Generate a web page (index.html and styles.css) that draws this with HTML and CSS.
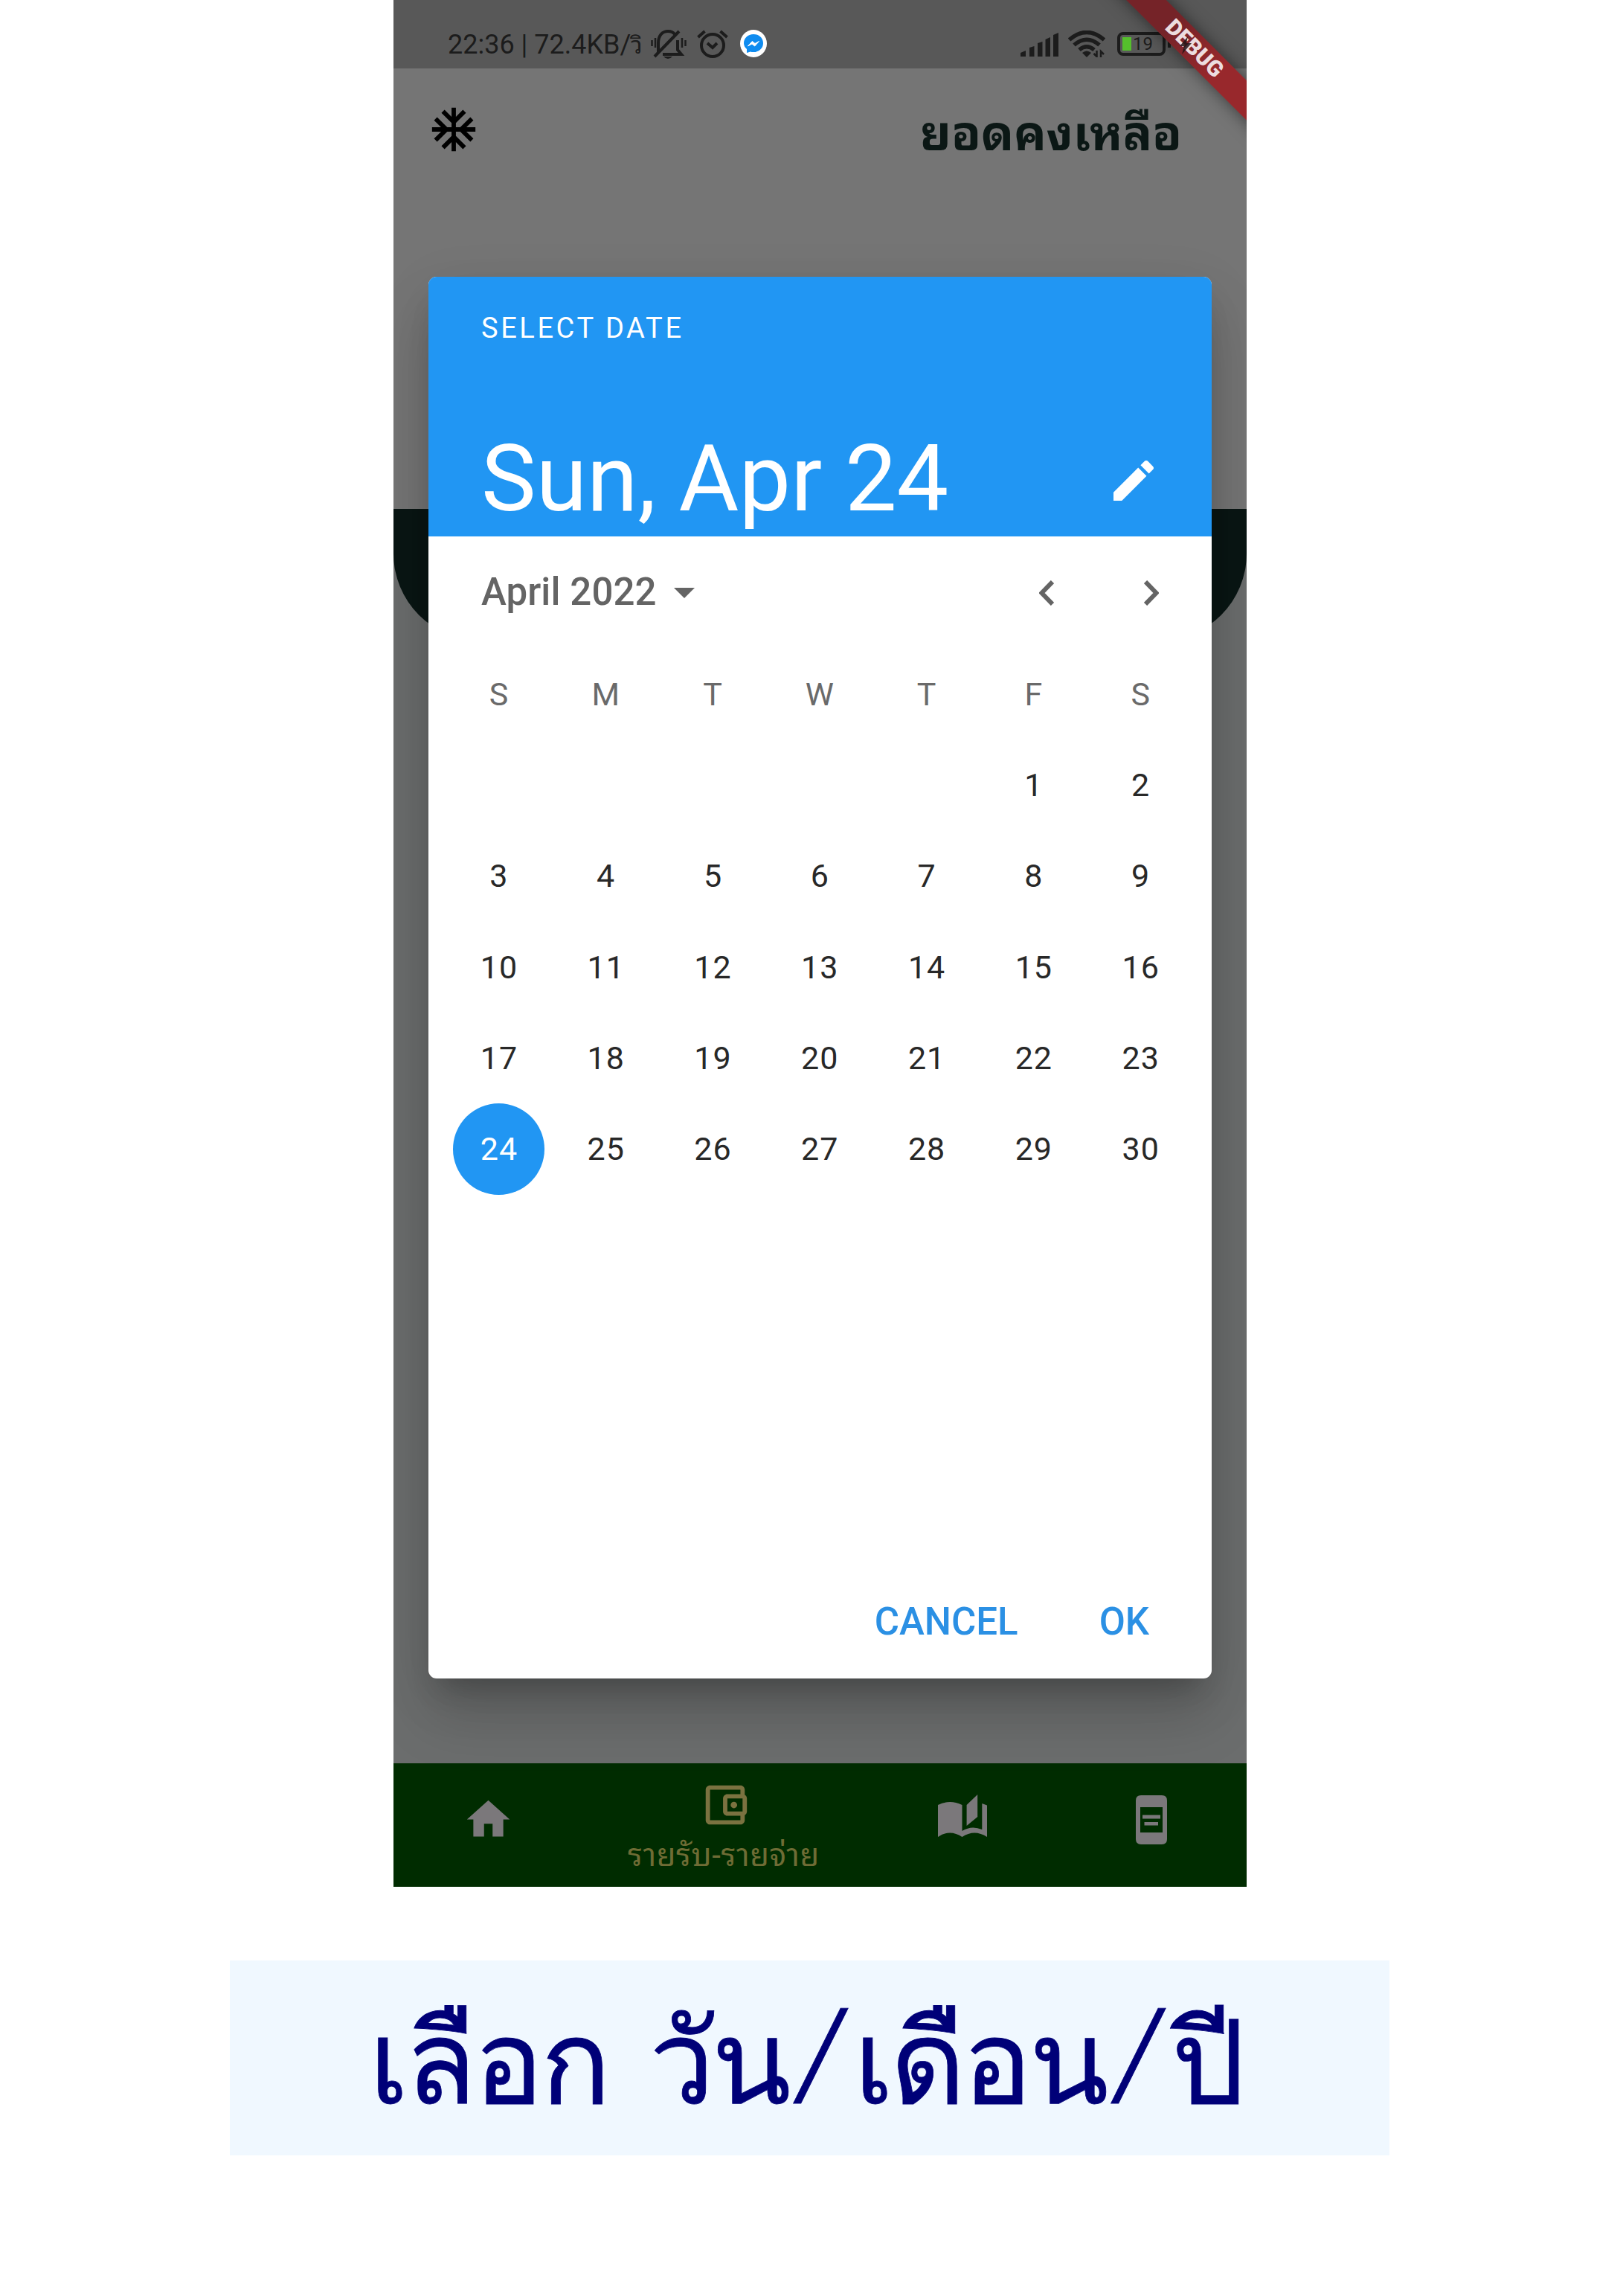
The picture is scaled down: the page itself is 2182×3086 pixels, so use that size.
FILE: index.html
```
<!DOCTYPE html>
<html lang="th">
<head>
<meta charset="utf-8">
<title>เลือก วัน/เดือน/ปี</title>
<link rel="stylesheet" href="styles.css">
</head>
<body>
<main class="page">
  <section class="phone">
    <header class="status">
      <span class="status-text">22:36 | 72.4KB/<span class="unit">วิ</span></span>
      <svg class="bell" viewBox="0 0 48 40" fill="none" stroke="#1c1c1c" stroke-width="4">
        <path d="M10 31V18C10 7 16 2 23 2c4 0 7 1 9 4M36 14v13l5 6H16M5 36L38 2"/>
        <path d="M1.500 14v8M6 11v13M42 11v13M46.500 14v8" stroke-width="2.500"/>
        <path d="M17 36h12q-6 6-12 0z" fill="#1c1c1c" stroke="none"/>
      </svg>
      <svg class="alarm" viewBox="0 0 42 38" fill="none" stroke="#1c1c1c" stroke-width="4">
        <circle cx="21" cy="21" r="15"/><path d="M14 18l7 6 6-6M1.500 10l9-8M31.500 2l9 8"/>
      </svg>
      <svg class="messenger" viewBox="0 0 36 37">
        <ellipse cx="18" cy="18.500" rx="18" ry="18.500" fill="#fff"/>
        <path d="M18 6c7.500 0 13 5.200 13 12s-5.500 12-13 12c-2 0-3-.3-4-.6L9 31v-5c-2.500-2-4-4.800-4-8C5 11.200 10.500 6 18 6z" fill="#0f8cf0"/>
        <path d="M10.500 22l5.800-6.500 3.700 3 5.500-3-5.800 6.500-3.700-3z" fill="#fff" stroke="#fff"/>
      </svg>
      <span class="spacer"></span>
      <svg class="signal" viewBox="0 0 51 32" fill="#1c1c1c">
        <path d="M0 32v-5l7-3v8zM12 32V20l6.500-2v14zM23 32V14l6.500-2v20zM33.500 32V9l6.500-3v26zM44 32V3l7-3v32z"/>
      </svg>
      <svg class="wifi" viewBox="0 0 50 36" fill="none" stroke="#1c1c1c" stroke-width="5.500">
        <path d="M1.500 12.500Q25-7.500 48.500 12.500M8 19.500Q25 5 42 19.500M15 26Q25 17.500 35 26"/>
        <path d="M19 30q6-5 12 0l-6 6z" fill="#1c1c1c" stroke="none"/>
        <path d="M38.500 27v8l-4-4M44 36v-8l4 4" stroke-width="2.500"/>
      </svg>
      <span class="battery"><i class="charge"></i>19</span>
      <span class="nub"></span>
    </header>
    <div class="ribbon">DEBUG</div>
    <svg class="bolt" viewBox="0 0 16 24"><path d="M11 0L0 13h6L3 24 16 9H9z"/></svg>

    <div class="balance">
      <svg class="snow" viewBox="0 0 24 24"><path d="M22 11h-4.170l3.240-3.240-1.410-1.420L15 11h-2V9l4.660-4.660-1.420-1.410L13 6.170V2h-2v4.170L7.760 2.930 6.340 4.340 11 9v2H9L4.340 6.340 2.930 7.760 6.170 11H2v2h4.170l-3.240 3.240 1.410 1.420L9 13h2v2l-4.660 4.660 1.420 1.410L11 17.830V22h2v-4.170l3.240 3.240 1.420-1.410L13 15v-2h2l4.660 4.660 1.410-1.420L17.830 13H22z"/></svg>
      <h1 class="title">ยอดคงเหลือ</h1>
    </div>
    <div class="backdrop"><div class="panel"></div></div>

    <nav class="nav">
      <svg class="home" viewBox="0 0 24 24"><path d="M10 20v-6h4v6h5v-8h3L12 3 2 12h3v8z"/></svg>
      <div class="tab">
        <svg class="wallet" viewBox="0 0 24 24"><path d="M21 7.280V5c0-1.100-.9-2-2-2H5c-1.110 0-2 .9-2 2v14c0 1.100.89 2 2 2h14c1.100 0 2-.9 2-2v-2.280c.59-.35 1-.98 1-1.720V9c0-.74-.41-1.370-1-1.720zM20 9v6h-7V9h7zM5 19V5h14v2h-6c-1.100 0-2 .9-2 2v6c0 1.100.9 2 2 2h6v2H5z"/><circle cx="16" cy="12" r="1.500"/></svg>
        <span class="tab-label">รายรับ-รายจ่าย</span>
      </div>
      <svg class="book" viewBox="0 0 66 57"><path d="M0 14Q16 6 32.500 14V49Q45 41 59.300 47V12L66 14.500V57Q49 46 32.500 57 16 46 0 57zM38.600 14L53.200 0V30L38.600 42z"/></svg>
      <svg class="doc" viewBox="0 0 42 66"><path fill-rule="evenodd" d="M7 0h28q7 0 7 7v52q0 7-7 7H7q-7 0-7-7V7q0-7 7-7zM6 16v34h30V16z"/><path d="M9 26.500h24v5H9zM11.500 36h18.500v4.500H11.500z"/></svg>
    </nav>

    <div class="dialog">
      <div class="head">
        <div class="kicker">SELECT DATE</div>
        <div class="head-row">
          <div class="headline">Sun, Apr 24</div>
          <svg class="pencil" viewBox="3 3 18 18"><path d="M3 17.250V21h3.750L17.810 9.940l-3.750-3.750L3 17.250zM20.710 7.040c.39-.39.39-1.020 0-1.410l-2.340-2.340c-.39-.39-1.020-.39-1.410 0l-1.830 1.830 3.750 3.750 1.830-1.830z"/></svg>
        </div>
      </div>
      <div class="month">
        <span class="month-name">April 2022</span>
        <svg class="caret" viewBox="0 0 28 14"><path d="M0 0h28L14 14z"/></svg>
        <span class="spacer"></span>
        <svg class="chev" viewBox="0 0 20 34"><path d="M18 2L3.500 17 18 32"/></svg>
        <svg class="chev next" viewBox="0 0 20 34"><path d="M2 2l14.500 15L2 32"/></svg>
      </div>
      <div class="days">
        <span class="wd">S</span><span class="wd">M</span><span class="wd">T</span><span class="wd">W</span><span class="wd">T</span><span class="wd">F</span><span class="wd">S</span>
        <span class="first">1</span><span>2</span>
        <span>3</span><span>4</span><span>5</span><span>6</span><span>7</span><span>8</span><span>9</span>
        <span>10</span><span>11</span><span>12</span><span>13</span><span>14</span><span>15</span><span>16</span>
        <span>17</span><span>18</span><span>19</span><span>20</span><span>21</span><span>22</span><span>23</span>
        <span class="selected">24</span><span>25</span><span>26</span><span>27</span><span>28</span><span>29</span><span>30</span>
      </div>
      <div class="actions"><span class="cancel">CANCEL</span><span class="ok">OK</span></div>
    </div>
  </section>
  <p class="caption">เลือก วัน<span class="slash">/</span>เดือน<span class="slash">/</span>ปี</p>
</main>
</body>
</html>
```
FILE: styles.css
```
* { box-sizing: border-box; }
body { margin: 0; background: #fff; font-family: Roboto, "Noto Sans Thai Looped", "Noto Sans", sans-serif; }
svg { display: block; flex: none; }
.page { height: 3086px; overflow: hidden; }
.spacer { flex: 1; }

.phone { position: relative; width: 1147px; height: 2536px; margin-left: 529px; overflow: hidden; display: flex; flex-direction: column; background: #757575; }
.status { height: 92px; background: #585858; display: flex; align-items: flex-start; padding: 40px 102px 0 73px; color: #1c1c1c; flex: none; }
.status-text { width: 263px; margin-top: -2px; font-size: 36px; line-height: 44px; white-space: nowrap; }
.unit { font-size: 32px; }
.bell { width: 48px; height: 40px; margin-left: 10px; }
.alarm { width: 42px; height: 38px; margin-left: 14px; }
.messenger { width: 36px; height: 37px; margin-left: 16px; }
.signal { width: 51px; height: 32px; margin: 4px 13px 0 0; }
.wifi { width: 50px; height: 36px; margin: 1px 16px 0 0; }
.battery { width: 65px; height: 32px; margin-top: 3px; border: 4px solid #1c1c1c; border-radius: 8px; display: flex; align-items: center; gap: 2px; padding-left: 3px; font-size: 24px; line-height: 24px; }
.charge { width: 12px; height: 18px; background: #55c02c; }
.nub { width: 4px; height: 9px; margin: 15px 0 0 3px; background: #1c1c1c; }
.ribbon { position: absolute; left: 927px; top: 46px; width: 300px; height: 38px; transform: rotate(45deg); background: linear-gradient(90deg, #752328 35%, #98282c 65%); box-shadow: 0 0 22px rgba(0,0,0,.5); color: #ecdcdf; font-size: 30px; font-weight: 900; line-height: 38px; text-align: center; }
.bolt { position: absolute; left: 1057px; top: 49px; width: 16px; height: 24px; fill: #241517; opacity: .85; }

.balance { height: 592px; flex: none; display: flex; justify-content: space-between; align-items: flex-start; padding: 47px 87px 0 46px; }
.snow { width: 70px; height: 70px; }
.title { margin: -4px 0 0; font-size: 65px; line-height: 90px; font-weight: 700; color: #0b1715; white-space: nowrap; }
.backdrop { flex: 1; background: #6b6d6d; }
.panel { height: 177px; background: #0a1614; border-radius: 0 0 117px 117px; }

.nav { height: 166px; flex: none; background: #002c00; display: flex; align-items: flex-start; fill: #7b787b; }
.home { width: 69px; height: 69px; margin: 41px 0 0 93px; }
.tab { width: 290px; margin: 21px 0 0 137px; display: flex; flex-direction: column; align-items: center; fill: #7b7240; }
.wallet { width: 70px; height: 70px; margin-left: 4px; }
.tab-label { color: #6f6c35; font-size: 42px; line-height: 54px; letter-spacing: .6px; margin-top: 6px; white-space: nowrap; }
.book { width: 66px; height: 57px; margin: 42px 0 0 143px; }
.doc { width: 42px; height: 66px; margin: 43px 0 0 200px; }

.dialog { position: absolute; left: 47px; top: 372px; width: 1053px; height: 1884px; display: flex; flex-direction: column; background: #fff; border-radius: 11px; overflow: hidden; box-shadow: 0 26px 36px -16px rgba(0,0,0,.2), 0 50px 80px 0 rgba(0,0,0,.15), 0 20px 80px 0 rgba(0,0,0,.08); }
.head { height: 349px; flex: none; background: #2196f3; color: #fff; padding: 46px 78px 19px 71px; display: flex; flex-direction: column; justify-content: space-between; }
.kicker { font-size: 38px; line-height: 46px; letter-spacing: 3.600px; }
.head-row { display: flex; justify-content: space-between; align-items: center; height: 120px; }
.headline { font-size: 124px; line-height: 120px; margin-top: 4px; white-space: nowrap; }
.pencil { width: 54px; height: 54px; fill: #fff; margin-top: 8px; }
.month { height: 148px; margin-bottom: 3px; flex: none; display: flex; align-items: center; padding: 0 71px; color: #646464; }
.month-name { width: 259px; font-size: 51px; font-weight: 500; letter-spacing: .1px; white-space: nowrap; }
.caret { width: 28px; height: 14px; fill: #646464; margin-top: 4px; }
.chev { width: 20px; height: 34px; margin-top: 4px; fill: none; stroke: #646464; stroke-width: 6; }
.next { margin-left: 121px; }
.days { display: grid; grid-template-columns: repeat(7, 143.800px); grid-auto-rows: 122.200px; padding-left: 23px; font-size: 43px; line-height: 122px; letter-spacing: 1px; text-align: center; color: #282828; }
.wd { color: #6a6a6a; }
.first { grid-column: 6; }
.selected { width: 123px; height: 123px; justify-self: center; background: #2196f3; color: #fff; border-radius: 50%; }
.actions { margin-top: auto; height: 154px; display: flex; justify-content: flex-end; align-items: center; gap: 109px; padding-right: 84px; color: #2b90e4; font-size: 51px; font-weight: 500; }

.caption { margin: 99px 0 0 309px; padding: 0 0 0 187px; width: 1559px; height: 262px; background: #f0f8ff; color: #000078; font-family: "DejaVu Sans", sans-serif; font-size: 156px; line-height: 246px; letter-spacing: -4px; word-spacing: 10px; white-space: nowrap; -webkit-text-stroke: .8px #000078; }
.slash { display: inline-block; width: 88px; height: 246px; vertical-align: baseline; line-height: 246px; font-family: "Noto Sans", sans-serif; font-size: 179px; font-weight: 300; text-align: center; transform: translateX(-2px) skewX(-7deg); }
```
